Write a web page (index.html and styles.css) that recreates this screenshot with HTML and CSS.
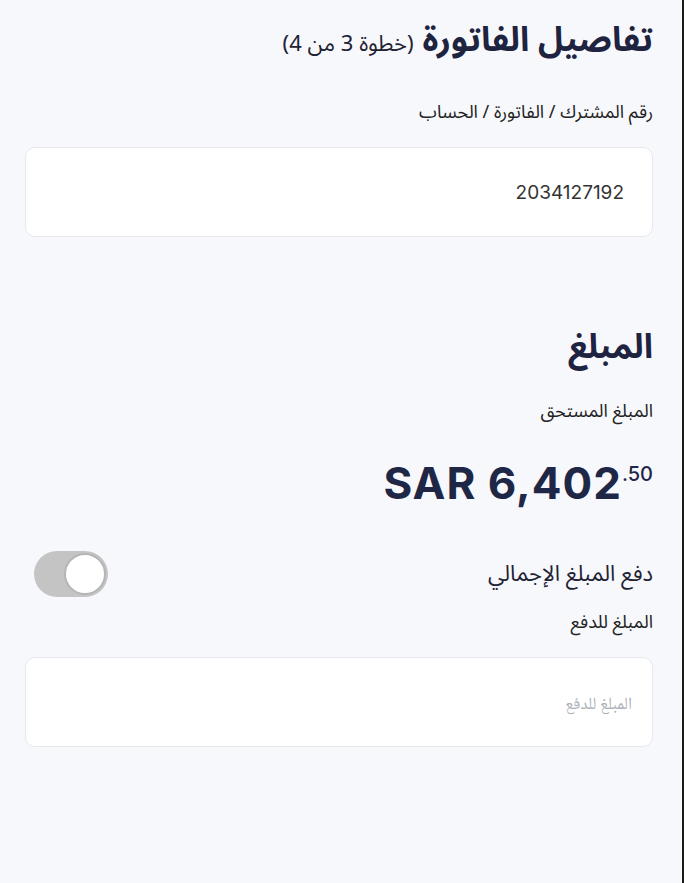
FILE: index.html
```html
<!DOCTYPE html>
<html lang="ar" dir="rtl">
<head>
    <meta charset="UTF-8">
    <meta name="viewport" content="width=device-width, initial-scale=1.0">
    <title>تفاصيل الفاتورة</title>
    <link rel="stylesheet" href="styles.css">
</head>
<body>
    <div class="page">
        <section class="bill-section">
            <h1 class="section-title">تفاصيل الفاتورة <span class="step">(خطوة 3 من 4)</span></h1>
            <label class="field-label" for="account">رقم المشترك / الفاتورة / الحساب</label>
            <div class="field">
                <input class="field-input" id="account" type="text" value="2034127192" dir="ltr">
            </div>
        </section>

        <section class="amount-section">
            <h2 class="section-title">المبلغ</h2>
            <div class="field-label">المبلغ المستحق</div>
            <div class="amount" dir="ltr">
                <span class="amount-main">SAR 6,402</span><span class="amount-cents">.50</span>
            </div>

            <div class="toggle-row">
                <span class="toggle-label">دفع المبلغ الإجمالي</span>
                <span class="toggle">
                    <span class="toggle-knob"></span>
                </span>
            </div>

            <label class="field-label" for="pay">المبلغ للدفع</label>
            <div class="field">
                <input class="field-input" id="pay" type="text" placeholder="المبلغ للدفع">
            </div>
        </section>
    </div>
</body>
</html>
```

FILE: styles.css
```css
* {
    margin: 0;
    padding: 0;
    box-sizing: border-box;
}

body {
    font-family: "Noto Sans Arabic", "Noto Naskh Arabic", "DejaVu Sans", sans-serif;
    background: #f7f8fc;
    color: #1f2233;
    min-height: 100vh;
    border-right: 2px solid #1a1a1a;
}

.page {
    padding: 14px 29px 0 25px;
}

.section-title {
    font-size: 34px;
    font-weight: 700;
    color: #1e2340;
    line-height: 52px;
}

.step {
    font-size: 22px;
    font-weight: 400;
    color: #1f2233;
}

.field-label {
    display: block;
    font-size: 18px;
    color: #222;
    line-height: 26px;
}

.bill-section .field-label {
    margin-top: 29px;
}

.field {
    margin-top: 22px;
    background: #fff;
    border: 1px solid #e6e8ee;
    border-radius: 10px;
    height: 90px;
    display: flex;
    align-items: center;
}

.field-input {
    width: 100%;
    border: none;
    outline: none;
    background: transparent;
    padding: 0 28px;
    font-family: "Inter", "Noto Sans Arabic", "DejaVu Sans", sans-serif;
    font-size: 19px;
    color: #333;
    text-align: right;
}

.field-input::placeholder {
    font-family: "Noto Naskh Arabic", "Noto Sans Arabic", "DejaVu Sans", sans-serif;
    font-size: 17px;
    color: #aab0b8;
}

#pay {
    padding-right: 20px;
}

.amount-section {
    margin-top: 84px;
}

.amount-section .field-label {
    margin-top: 25px;
}

.amount {
    margin-top: 22px;
    text-align: right;
    font-family: "Inter", sans-serif;
    color: #1f2747;
    line-height: 56px;
}

.amount-main {
    font-size: 44px;
    font-weight: 700;
    letter-spacing: 1px;
}

.amount-cents {
    font-size: 20px;
    font-weight: 500;
    vertical-align: 18px;
}

.toggle-row {
    margin-top: 30px;
    display: flex;
    align-items: center;
    justify-content: space-between;
    padding-left: 9px;
}

.toggle-label {
    font-size: 22px;
    color: #1f2233;
}

.toggle {
    width: 74px;
    height: 46px;
    border-radius: 23px;
    background: #c4c4c4;
    display: flex;
    align-items: center;
    justify-content: flex-start;
    padding: 0 2px;
}

.toggle-knob {
    width: 42px;
    height: 42px;
    border-radius: 50%;
    background: #fff;
    border: 2px solid #b5b5b5;
}

.toggle-row + .field-label {
    margin-top: 12px;
}
```
